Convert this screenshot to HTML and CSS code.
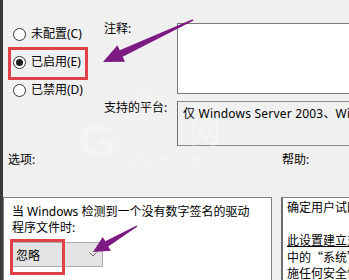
FILE: index.html
```html
<!DOCTYPE html>
<html lang="zh-CN">
<head>
  <meta charset="UTF-8">
  <meta name="viewport" content="width=device-width, initial-scale=1.0">
  <title>驱动程序签名选项</title>
  <link rel="stylesheet" href="styles.css">
</head>
<body>

<div class="window">
  <div class="top">
    <div class="states">
      <label class="state"><span class="radio"></span>未配置(C)</label>
      <label class="state"><span class="radio checked"></span>已启用(E)</label>
      <label class="state"><span class="radio"></span>已禁用(D)</label>
    </div>
    <div class="field-label">注释:</div>
    <div class="comment-box"></div>
    <div class="field-label platform-label">支持的平台:</div>
    <div class="platform-box">仅 Windows Server 2003、Windows XP</div>
  </div>

  <div class="bottom">
    <div class="section-label options-label">选项:</div>
    <div class="section-label help-label">帮助:</div>

    <div class="panel options">
      <p>当 Windows 检测到一个没有数字签名的驱动<br>程序文件时:</p>
      <div class="select">
        <span>忽略</span>
        <svg class="chevron" width="8" height="5" viewBox="0 0 8 5"><path d="M0.5 0.5 L4 4 L7.5 0.5" fill="none" stroke="#6a6a6a" stroke-width="1"/></svg>
      </div>
    </div>

    <div class="panel help">
      <div class="line">确定用户试图安装没有数字签名的设备驱动程序时发生的情况。</div>
      <div class="line">&nbsp;</div>
      <div class="line link">此设置建立对未签名的驱动程序的最低响应</div>
      <div class="line">中的“系统”</div>
      <div class="line">施任何安全性要求</div>
    </div>
  </div>

  <svg class="marks" width="349" height="280" viewBox="0 0 349 280">
    <g class="watermark">
      <text x="78" y="157" font-size="48">G</text>
      <text x="140" y="108" font-size="18">X</text>
      <text x="190" y="142" font-size="30">网</text>
      <text x="128" y="163" font-size="11">gxsystem.com</text>
    </g>
    <rect x="9.5" y="48.5" width="77" height="30" fill="none" stroke="#df4146" stroke-width="3"/>
    <rect x="11.5" y="240.5" width="52" height="33" fill="none" stroke="#df4146" stroke-width="3"/>
    <polygon fill="#7d1b82" points="192.5,19.3 119.7,50.3 117.4,45.3 103,62 125,61.7 122.7,56.7 193.6,20.6"/>
    <polygon fill="#7d1b82" points="136.6,225.5 105.3,241.3 102.7,237 93,252 110.9,250.8 108.3,246.5 137.4,226.5"/>
  </svg>
</div>

</body>
</html>
```

FILE: styles.css
```css
* {
  box-sizing: border-box;
  margin: 0;
  padding: 0;
}

html {
  overflow: hidden;
}

body {
  background-color: #f0f0f0;
  font-family: "Noto Sans", "Noto Sans CJK SC", sans-serif;
  font-size: 12px;
  color: #000;
}

.window {
  position: relative;
  width: 460px;
  height: 280px;
  border-left: 3px solid #3a3a3a;
  overflow: hidden;
}

.top {
  display: grid;
  grid-template-columns: 97px 77px 260px;
  grid-template-rows: 71px 45px;
  row-gap: 7px;
  padding-top: 23px;
}

.states {
  grid-row: 1;
  grid-column: 1;
  margin-top: -3px;
  padding-left: 10px;
}

.state {
  display: flex;
  align-items: center;
  height: 28px;
  line-height: 14px;
}

.radio {
  position: relative;
  width: 13px;
  height: 13px;
  margin-right: 5px;
  border: 1px solid #333;
  border-radius: 50%;
  background: #fff;
}

.radio.checked::after {
  content: "";
  position: absolute;
  top: 2px;
  left: 2px;
  width: 7px;
  height: 7px;
  border-radius: 50%;
  background: #1e1e1e;
}

.field-label {
  grid-column: 2;
  padding-left: 4px;
  line-height: 12px;
  white-space: nowrap;
}

.platform-label {
  grid-row: 2;
  line-height: 14px;
}

.comment-box {
  grid-column: 3;
  grid-row: 1;
  border: 1px solid #7a7a7a;
  background: #fff;
}

.platform-box {
  grid-column: 3;
  grid-row: 2;
  border: 1px solid #8a8a8a;
  border-left-color: #6e6e6e;
  background: #f0f0f0;
  padding: 4px 5px;
  line-height: 16px;
  letter-spacing: 0.2px;
  white-space: nowrap;
}

.bottom {
  display: grid;
  grid-template-columns: 269px 200px;
  column-gap: 9px;
  row-gap: 29px;
  margin-top: 6px;
}

.section-label {
  line-height: 16px;
}

.options-label {
  padding-left: 5px;
}

.help-label {
  padding-left: 1px;
}

.panel {
  height: 100px;
  border: 1px solid #828282;
  background: #fff;
}

.options {
  padding: 6px 8px;
}

.options p {
  line-height: 16px;
  white-space: nowrap;
}

.select {
  display: flex;
  justify-content: space-between;
  align-items: center;
  width: 91px;
  height: 25px;
  margin-top: 6px;
  padding: 0 5px 0 3px;
  border: 1px solid #adadad;
  background: #e3e3e3;
}

.help {
  padding: 1px 4px;
  border-left: 2px solid #6e6e6e;
  font-family: "Noto Sans CJK SC", sans-serif;
}

.help .line {
  line-height: 16.5px;
  white-space: nowrap;
}

.help .link {
  text-decoration: underline;
}

.marks {
  position: absolute;
  top: 0;
  left: -3px;
  pointer-events: none;
}

.watermark text {
  fill: #ffffff;
  opacity: 0.3;
  font-family: "Liberation Sans", sans-serif;
  font-weight: bold;
}
```
